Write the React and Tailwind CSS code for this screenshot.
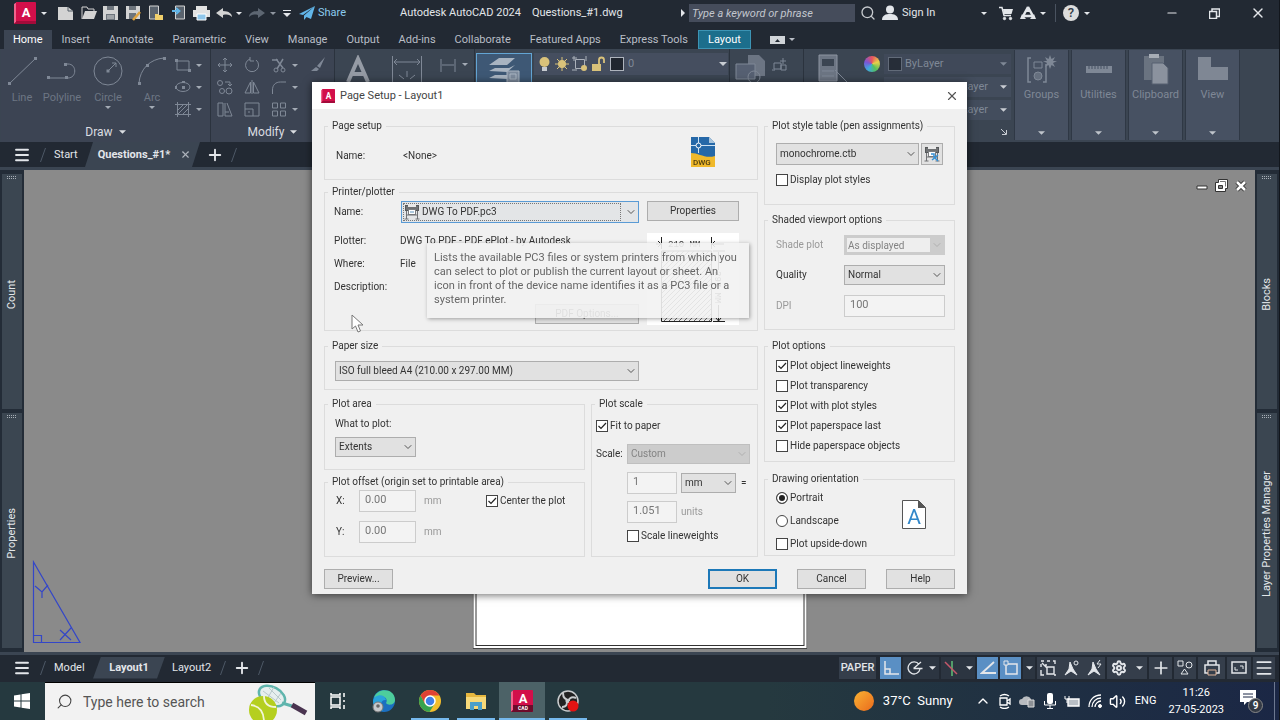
import { useState } from "react";
import clsx from "clsx";
import {
  ChevronDown,
  ChevronUp,
  Menu,
  Plus,
  Search,
  X,
  Settings,
  Volume2,
  Minus,
} from "lucide-react";

const ribbonTabs = [
  "Home",
  "Insert",
  "Annotate",
  "Parametric",
  "View",
  "Manage",
  "Output",
  "Add-ins",
  "Collaborate",
  "Featured Apps",
  "Express Tools",
  "Layout",
];

const plotOptions = [
  { label: "Plot object lineweights", checked: true },
  { label: "Plot transparency", checked: false },
  { label: "Plot with plot styles", checked: true },
  { label: "Plot paperspace last", checked: true },
  { label: "Hide paperspace objects", checked: false },
];

/* ---------- small shared pieces ---------- */

function Svg({ w = 16, h = 16, className, children, box }) {
  return (
    <svg
      width={w}
      height={h}
      viewBox={box || `0 0 ${w} ${h}`}
      fill="none"
      stroke="currentColor"
      className={clsx("shrink-0", className)}
      aria-hidden="true"
    >
      {children}
    </svg>
  );
}

function Caret({ className }) {
  return (
    <Svg w={8} h={4} className={className}>
      <path d="M0 0h8L4 4z" fill="currentColor" stroke="none" />
    </Svg>
  );
}

function SmallCaret({ className }) {
  return (
    <Svg w={6} h={3} className={className}>
      <path d="M0 0h6L3 3z" fill="currentColor" stroke="none" />
    </Svg>
  );
}

function Slash() {
  return (
    <Svg w={8} h={16} className="text-[#4d5866]">
      <path d="M1.500 15L6.500 1" />
    </Svg>
  );
}

function AcadLogo({ size = 22, cad }) {
  return (
    <Svg w={size} h={size} box="0 0 22 22">
      <path d="M0 2L3 0v20l-3 2z" fill="#f0648c" stroke="none" />
      <path d="M2 0h19a1 1 0 0 1 1 1v20a1 1 0 0 1-1 1H0l2-2z" fill="#d20f4a" stroke="none" />
      <path
        d={cad ? "M2 15h20v6a1 1 0 0 1-1 1H0l2-2z" : "M2 19h20v2a1 1 0 0 1-1 1H0l2-2z"}
        fill={cad ? "#6d0b2b" : "#a30b3a"}
        stroke="none"
      />
      <text
        x="12"
        y={cad ? 13 : 15}
        textAnchor="middle"
        fontSize="13"
        fontWeight="700"
        fill="#fff"
        stroke="none"
        className="font-['Roboto',sans-serif]"
      >
        A
      </text>
      {cad && (
        <text
          x="12"
          y="20"
          textAnchor="middle"
          fontSize="5"
          fontWeight="700"
          fill="#fff"
          stroke="none"
          className="font-['Roboto',sans-serif]"
        >
          CAD
        </text>
      )}
    </Svg>
  );
}

function PlotterIcon({ blue }) {
  return (
    <Svg w={16} h={16}>
      <rect x="1.500" y="1.500" width="13" height="5" fill="#6f7173" stroke="#55585a" />
      <rect x="4" y="0" width="8" height="3" fill="#e9e9e9" stroke="none" />
      <rect x="4.500" y="5.500" width="7" height="5" fill="#fff" stroke="#7b7d80" />
      <path d="M2.500 7v8M13.500 7v8M0.500 15h4M11.500 15h4M3 11h10" stroke="#707275" />
      {blue ? (
        <path d="M7 8h3v3l4 4M14 9l-6 5" stroke="#3490d6" strokeWidth="1.500" />
      ) : (
        <path d="M6 8h4" stroke="#5c93bd" />
      )}
    </Svg>
  );
}

/* ---------- form controls of the dialog ---------- */

function Group({ title, className, children }) {
  return (
    <fieldset className={clsx("min-w-0 border border-[#dcdcdc]", className)}>
      <legend className="ml-[3px] h-[14px] px-1 leading-[14px]">{title}</legend>
      {children}
    </fieldset>
  );
}

function Select({ id, label, value, disabled, className, icon, focused, framed }) {
  return (
    <div className={clsx("relative", className)}>
      {icon && (
        <div className="pointer-events-none absolute inset-y-0 left-[3px] flex items-center">
          {icon}
        </div>
      )}
      <select
        id={id}
        aria-label={label}
        disabled={disabled}
        defaultValue={value}
        className={clsx(
          "h-full w-full appearance-none outline-none",
          framed
            ? "border-3 border-r-[15px] border-[#cccccc] bg-[#eeeeee] pl-px text-[#838383] opacity-100"
            : "border pr-5",
          !framed && (icon ? "pl-5" : "pl-[3px]"),
          !framed &&
            (disabled
              ? "border-[#bfbfbf] bg-[#cccccc] text-[#838383] opacity-100"
              : focused
                ? "border-[#5a9bd5] bg-[#e3e5e7]"
                : "border-[#adadad] bg-[#e1e1e1]")
        )}
      >
        <option>{value}</option>
      </select>
      {focused && (
        <div className="pointer-events-none absolute inset-y-[2px] left-[2px] right-[18px] border border-dotted border-[#777]" />
      )}
      <ChevronDown
        size={12}
        strokeWidth={2}
        className={clsx(
          "pointer-events-none absolute inset-y-0 right-[2px] my-auto",
          disabled ? "text-[#b0b0b0]" : "text-[#555]"
        )}
      />
    </div>
  );
}

function Tick({ label, checked }) {
  const [on, setOn] = useState(Boolean(checked));
  return (
    <label className="flex items-center gap-[2px]">
      <span className="relative flex size-3">
        <input
          type="checkbox"
          checked={on}
          onChange={(e) => setOn(e.target.checked)}
          className="size-3 appearance-none border border-[#444] bg-white"
        />
        {on && (
          <Svg w={12} h={12} className="pointer-events-none absolute text-[#222]">
            <path d="M2.500 6l2.500 2.500L10 3" strokeWidth="1.200" />
          </Svg>
        )}
      </span>
      {label}
    </label>
  );
}

function Radio({ label, value, current, onPick }) {
  return (
    <label className="flex items-center gap-[2px]">
      <input
        type="radio"
        name="orientation"
        value={value}
        checked={current === value}
        onChange={() => onPick(value)}
        className="size-3 appearance-none rounded-full border border-[#444] bg-white checked:bg-[#222] checked:shadow-[inset_0_0_0_2px_#fff]"
      />
      {label}
    </label>
  );
}

function Button({ children, className, primary }) {
  return (
    <button
      type="button"
      className={clsx(
        "h-5 bg-[#e1e1e1]",
        primary ? "border-2 border-[#1c78b8]" : "border border-[#adadad]",
        className
      )}
    >
      {children}
    </button>
  );
}

function NumberBox({ id, label, value, className }) {
  return (
    <input
      id={id}
      aria-label={label}
      type="text"
      disabled
      defaultValue={value}
      className={clsx(
        "h-[22px] border border-[#cccccc] bg-[#f3f3f3] pb-1 pl-[5px] text-[11px] text-[#777]",
        className
      )}
    />
  );
}

/* ---------- title bar ---------- */

function TitleBar() {
  return (
    <header className="flex h-[26px] shrink-0 items-center bg-[#222933] text-[11px] text-[#e3e6ea]">
      <button type="button" aria-label="Application menu" className="ml-[14px] flex items-center gap-1">
        <AcadLogo />
        <SmallCaret className="ml-[1px]" />
      </button>
      <div className="ml-2 grid w-[180px] grid-cols-8 place-items-center text-[#d3d3d3]">
        <Svg>
          <path d="M0 2h10l5 4v9H0z" fill="currentColor" stroke="none" />
          <path d="M10 2v4h5" stroke="#555e69" />
        </Svg>
        <Svg>
          <path d="M1 14V2h5l1 2h6v2" />
          <path d="M1 14L4 6h12l-3 8z" fill="currentColor" stroke="none" />
        </Svg>
        <Svg>
          <path d="M0 1h15v14H0z" fill="currentColor" stroke="none" />
          <path d="M4 1h7v4H4zM3 9h9v6H3z" fill="#6d747c" stroke="none" />
          <path d="M4 11h7M4 13h7" stroke="#d3d3d3" />
        </Svg>
        <Svg>
          <path d="M0 1h14v13H0z" fill="currentColor" stroke="none" />
          <path d="M3 1h7v4H3zM3 8h7v6H3z" fill="#6d747c" stroke="none" />
          <path d="M7 15l7-8" stroke="#e0a33e" strokeWidth="2.500" />
        </Svg>
        <Svg>
          <path d="M1.500 1h9v13h-9z" fill="#59626d" />
          <path d="M7 9h3l1 1h4v5H7z" fill="#f0cf6b" stroke="none" />
        </Svg>
        <Svg>
          <path d="M4.500 1h9v13h-9z" fill="#59626d" />
          <path d="M1 6h6M5 3l3.500 3L5 9" stroke="#62b6e8" strokeWidth="1.800" />
        </Svg>
        <Svg w={17} h={16}>
          <path d="M3 1h11v4H3zM0 5h17v7H0z" fill="#e2e2e2" stroke="none" />
          <path d="M4 9h9v6H4z" fill="#8fc6ea" stroke="#fff" />
        </Svg>
        <Svg>
          <path d="M0 8l7-5v3c6 0 9 3 9 6-2-2-4-3-9-2v3z" fill="currentColor" stroke="none" />
        </Svg>
      </div>
      <SmallCaret className="ml-[1px]" />
      <Svg className="ml-[7px] text-[#5d6672]">
        <path d="M16 8L9 3v3c-6 0-9 3-9 6 2-2 4-3 9-2v3z" fill="currentColor" stroke="none" />
      </Svg>
      <SmallCaret className="ml-[5px] text-[#8f96a0]" />
      <Svg w={8} h={7} className="ml-[7px]">
        <path d="M0 .5h8" />
        <path d="M0 3h8L4 7z" fill="currentColor" stroke="none" />
      </Svg>
      <button type="button" className="ml-2 flex items-center gap-[3px] text-[#8ccbee]">
        <Svg w={16} h={14}>
          <path d="M16 0L0 8l4 1zM16 0L5 9.500V14l2.500-3L12 13z" fill="#62b6ea" stroke="none" />
        </Svg>
        Share
      </button>
      <h1 className="ml-[54px] whitespace-pre">
        Autodesk AutoCAD 2024{"    "}Questions_#1.dwg
      </h1>
      <div className="ml-auto flex items-center">
        <Svg w={4} h={8}>
          <path d="M0 0v8l4-4z" fill="currentColor" stroke="none" />
        </Svg>
        <input
          type="text"
          aria-label="Search help"
          placeholder="Type a keyword or phrase"
          className="ml-1 h-[18px] w-[166px] bg-[#454c5b] px-[3px] italic placeholder:text-[#c3c7ce]"
        />
        <Search size={16} className="ml-[5px] text-[#c6cace]" />
        <Svg className="ml-[6px]">
          <circle cx="8" cy="4.500" r="4" fill="currentColor" stroke="none" />
          <path d="M0 15c0-5 4-6 8-6s8 1 8 6z" fill="currentColor" stroke="none" />
        </Svg>
        <a href="#signin" className="ml-1 w-[79px]">Sign In</a>
        <SmallCaret />
        <Svg w={15} h={15} className="ml-3">
          <path d="M0 1.500h3l2 8h7" strokeWidth="1.500" />
          <path d="M4 3h10l-1.500 5h-8z" fill="currentColor" stroke="none" />
          <circle cx="5.500" cy="12.500" r="1.200" fill="currentColor" />
          <circle cx="11.500" cy="12.500" r="1.200" fill="currentColor" />
        </Svg>
        <Svg className="ml-[6px]">
          <path d="M8 2L2 13M8 2l6 11M4 11h8" strokeWidth="2.500" />
          <path d="M8 1l3 6H5zM0 14l2-5 4 5zM16 14l-2-5-4 5z" fill="currentColor" stroke="none" />
        </Svg>
        <SmallCaret className="ml-1" />
        <div className="ml-[9px] h-[18px] w-px bg-[#4a5360]" />
        <span className="ml-[7px] flex size-4 items-center justify-center rounded-full bg-[#dcdcdc] text-[13px] font-medium text-[#333b46]">
          ?
        </span>
        <SmallCaret className="ml-[5px]" />
        <button type="button" aria-label="Minimize" className="ml-[75px]">
          <Minus size={14} strokeWidth={2} />
        </button>
        <button type="button" aria-label="Restore" className="ml-[30px]">
          <Svg w={11} h={11}>
            <path d="M.5 3.500h7v7h-7zM3 3V1h7.500v7.500H8" strokeWidth="1.500" />
          </Svg>
        </button>
        <button type="button" aria-label="Close" className="mr-[13px] ml-[30px]">
          <X size={16} />
        </button>
      </div>
    </header>
  );
}

function RibbonTabs() {
  return (
    <nav className="flex h-[23px] shrink-0 items-end gap-px bg-[#222933] pl-1 text-[11px] text-[#b9bec6]">
      {ribbonTabs.map((tab) => (
        <a
          key={tab}
          href={`#${tab}`}
          className={clsx(
            "flex h-[19px] items-center px-[9px]",
            tab === "Home" && "bg-[#3c4553] text-white",
            tab === "Layout" && "border border-[#3c94b4] bg-[#1c6e8c] text-white"
          )}
        >
          {tab}
        </a>
      ))}
      <div className="flex h-[19px] items-center gap-1 pl-[18px]">
        <Svg w={15} h={8}>
          <path d="M0 0h15v8H0z" fill="#d0d4d8" stroke="none" />
          <path d="M5 6h5L7.500 3z" fill="#222933" stroke="none" />
        </Svg>
        <SmallCaret />
      </div>
    </nav>
  );
}

/* ---------- ribbon ---------- */

function BigTool({ label, className, caret, children }) {
  return (
    <button type="button" className={clsx("flex flex-col items-center", className)}>
      <Svg w={32} h={32}>{children}</Svg>
      <span className="mt-[3px] leading-[16px] text-[#6d7684]">{label}</span>
      {caret && <SmallCaret className="text-[#a4abb5]" />}
    </button>
  );
}

function PanelTitle({ children }) {
  return (
    <div className="flex h-5 items-center justify-center gap-[6px] text-[12px] text-[#dadde1]">
      {children} <Caret className="w-[7px]" />
    </div>
  );
}

function Ribbon() {
  return (
    <section className="flex h-[93px] shrink-0 overflow-hidden bg-[#3b4552] pl-px text-[11px] text-[#7f8896]">
      {/* Draw */}
      <div className="flex w-[210px] shrink-0 flex-col border-r border-[#2b333e] bg-[#3c4453]">
        <div className="flex flex-1 pt-[6px] pl-[2px]">
          <BigTool label="Line" className="w-[38px]">
            <path d="M3 29L30 3" />
            <path d="M2 27h3v3H2zM28 2h3v3h-3z" fill="currentColor" stroke="none" />
          </BigTool>
          <BigTool label="Polyline" className="w-[42px]">
            <path d="M2 23h20c9 0 9-14 0-14h-3" />
            <path d="M1 21h3v3H1zM19 21h3v3h-3zM18 8h3v3h-3z" fill="currentColor" stroke="none" />
          </BigTool>
          <BigTool label="Circle" className="w-[50px]" caret>
            <circle cx="16" cy="16" r="14" />
            <path d="M16 16l8-8M20 8h4v4" />
            <path d="M14.500 14.500h3v3h-3z" fill="currentColor" stroke="none" />
          </BigTool>
          <BigTool label="Arc" className="w-[38px]" caret>
            <path d="M3 28C4 14 14 4 28 3" />
            <path d="M2 27h3v3H2zM10 9h3v3h-3zM27 2h3v3h-3z" fill="currentColor" stroke="none" />
          </BigTool>
          <div className="ml-1 flex flex-col gap-[6px] pt-[2px]">
            <div className="flex items-center gap-[5px]">
              <Svg>
                <path d="M2 4h12v9H2z" />
                <path d="M0 2h3v3H0zM13 12h3v3h-3z" fill="currentColor" stroke="none" />
              </Svg>
              <SmallCaret className="text-[#a4abb5]" />
            </div>
            <div className="flex items-center gap-[5px]">
              <Svg>
                <ellipse cx="8" cy="8" rx="7" ry="4.500" />
                <path d="M7 7h3v3H7zM0 7h2v3H0zM7 2h3v2H7z" fill="currentColor" stroke="none" />
              </Svg>
              <SmallCaret className="text-[#a4abb5]" />
            </div>
            <div className="flex items-center gap-[5px]">
              <Svg>
                <path d="M0 3.500h16M0 13.500h16M2.500 1v15M13.500 1v15M3 9l6-6M3 13L13 3M8 13l5-5" />
              </Svg>
              <SmallCaret className="text-[#a4abb5]" />
            </div>
          </div>
        </div>
        <PanelTitle>Draw</PanelTitle>
      </div>

      {/* Modify */}
      <div className="flex w-[124px] shrink-0 flex-col border-r border-[#2b333e] bg-[#3c4453]">
        <div className="grid flex-1 auto-rows-[22px] grid-cols-[27px_27px_39px_27px] content-start items-center pt-[5px] pl-[6px]">
          <Svg>
            <path d="M8 1v14M1 8h14M6 3l2-2 2 2M6 13l2 2 2-2M3 6L1 8l2 2M13 6l2 2-2 2" />
          </Svg>
          <Svg>
            <path d="M12 3a6.500 6.500 0 1 1-6-1M6 0v4h4" />
          </Svg>
          <div className="flex items-center gap-[5px]">
            <Svg>
              <path d="M1 3h6M5 2l7 9M12 2L6 12" strokeWidth="1.500" />
              <circle cx="5" cy="13" r="2" />
              <circle cx="12" cy="13" r="2" />
            </Svg>
            <SmallCaret className="text-[#a4abb5]" />
          </div>
          <Svg>
            <path d="M15 0L7 9l3 2zM6 10l3 2-2 2H1z" fill="currentColor" stroke="none" />
          </Svg>
          <Svg>
            <circle cx="3" cy="4" r="2.500" />
            <circle cx="5" cy="12" r="2.500" />
            <circle cx="12" cy="12" r="3" />
            <path d="M8 3h5v4M11 5l2 2 2-2" />
          </Svg>
          <Svg>
            <path d="M6.500 3v11H1zM9.500 3v11H15zM8 1v14" />
          </Svg>
          <div className="flex items-center gap-[5px]">
            <Svg>
              <path d="M1.500 15v-4c0-5 3-8 8-8H15" />
            </Svg>
            <SmallCaret className="text-[#a4abb5]" />
          </div>
          <Svg>
            <path d="M2 13h12M4 10h8V5H4z" />
          </Svg>
          <Svg>
            <path d="M1 2h5v13H1zM8 2v13h7L10 2M8 11h4" />
          </Svg>
          <Svg>
            <path d="M1 2h14v13H1zM1 8h8v7M4 11h2" />
          </Svg>
          <div className="flex items-center gap-[5px]">
            <Svg>
              <path d="M1.500 2h5v5h-5zM9.500 2h5v5h-5zM1.500 10h5v5h-5zM9.500 10h5v5h-5z" />
            </Svg>
            <SmallCaret className="text-[#a4abb5]" />
          </div>
          <Svg>
            <path d="M2 4h12M2 9h12" />
          </Svg>
        </div>
        <PanelTitle>Modify</PanelTitle>
      </div>

      {/* Annotation */}
      <div className="flex w-[140px] shrink-0 items-start border-r border-[#2b333e] pt-[6px] pl-[10px]">
        <Svg w={26} h={28} className="text-[#959ba5]">
          <path d="M3 27L13 4l10 23M7 19h12" strokeWidth="4" />
        </Svg>
        <Svg w={32} h={32} className="ml-5">
          <path d="M1.500 1v30M30.500 1v30M3 7h26M6 4L3 7l3 3M26 4l3 3-3 3M16 16v6M8 20l5 4M24 20l-5 4" />
        </Svg>
        <Svg className="mt-[2px] ml-[17px]">
          <path d="M1 2v13M15 2v13M2 8h12" />
        </Svg>
        <SmallCaret className="mt-2 ml-[6px] text-[#a4abb5]" />
      </div>

      {/* Layers */}
      <div className="flex w-[255px] shrink-0 items-start gap-[2px] border-r border-[#2b333e] pt-1 pl-px">
        <button
          type="button"
          aria-label="Layer Properties"
          className="flex h-16 w-14 justify-center border border-[#63a5d4] bg-[#3e5875] pt-[2px]"
        >
          <Svg w={34} h={30} className="text-[#a9b4c1]">
            <path
              d="M2 9l10-7h16l-8 7zM2 15l6-3h14l6-3-8 7zM2 22l6-3h14l6-3-8 7z"
              fill="currentColor"
              stroke="none"
            />
            <path d="M20 15h12v14H20z" fill="#7d8b9d" />
            <path d="M23 18h6v5h-6z" />
          </Svg>
        </button>
        <div className="flex h-[22px] w-[194px] items-center gap-[2px] bg-[#454e5f] pr-[1px] pl-[3px]">
          <Svg w={15} h={16}>
            <circle cx="7.500" cy="6" r="5" fill="#d9c27a" stroke="none" />
            <path d="M5 11h5v4H5z" fill="#c7cbd0" stroke="none" />
          </Svg>
          <Svg>
            <circle cx="8" cy="8" r="4" fill="#d9c27a" stroke="none" />
            <path
              d="M8 1v14M1 8h14M3 3l10 10M13 3L3 13"
              stroke="#d9c27a"
              strokeWidth="1"
            />
          </Svg>
          <Svg>
            <path d="M3.500 3.500h9v9h-9z" stroke="#aab0b9" />
            <path d="M0 2h5M2 0v5M14 0v5M0 14h5" stroke="#aab0b9" />
            <circle cx="12" cy="12" r="3" fill="#d9c27a" stroke="none" />
          </Svg>
          <Svg>
            <path d="M2 8h9v7H2z" fill="#d9c27a" stroke="none" />
            <path d="M9 8V4a2.500 2.500 0 0 1 5 0v3" stroke="#d9c27a" strokeWidth="1.800" />
          </Svg>
          <div className="ml-[2px] size-[14px] border border-[#aeb4bd] bg-[#20262f]" />
          <span className="ml-[2px] text-[11px]">0</span>
          <Caret className="ml-auto text-[#c9cdd3]" />
        </div>
      </div>

      {/* Block */}
      <div className="flex w-[74px] shrink-0 items-start border-r border-[#2b333e] pt-[6px] pl-[5px]">
        <Svg w={32} h={28}>
          <path d="M13 0h11l6 6v15H13z" fill="#6c7583" stroke="none" />
          <path d="M1 9h19v15H1z" fill="#566072" />
          <circle cx="19" cy="22" r="6" />
        </Svg>
        <Svg className="mt-[2px] ml-[5px]">
          <path d="M2 6h7v6H2zM0 13h3M9 8h5v5H9zM11 1v6M8 4h6" />
        </Svg>
      </div>

      {/* Properties */}
      <div className="flex w-[208px] shrink-0 items-start pt-[5px] pl-[14px]">
        <Svg w={32} h={30}>
          <path d="M1 1h18v26H1z" fill="#6c7583" stroke="#8d95a1" />
          <path d="M4 5h12v7H4z" fill="#3b4552" stroke="none" />
          <path d="M4 17h12M4 22h12M17 16l12 12" />
        </Svg>
        <div className="mr-[1px] ml-[14px] flex flex-1 flex-col gap-[3px]">
          <div className="flex h-5 items-center gap-1">
            <span className="size-4 rounded-full bg-[conic-gradient(#e8525f,#e8d04a,#57c05a,#3fa9e0,#7a56d8,#e8525f)]" />
            <div className="flex h-5 flex-1 items-center gap-[3px] bg-[#404959] px-1">
              <div className="size-[14px] border border-[#626b79] bg-[#262d38]" />
              ByLayer
              <Caret className="ml-auto w-[7px]" />
            </div>
          </div>
          {["Lineweight", "Linetype"].map((row) => (
            <div key={row} aria-label={row} className="ml-5 flex h-5 items-center justify-end gap-3 bg-[#434d5d] pr-1">
              ByLayer
              <Caret className="w-[7px] text-[#c9cdd3]" />
            </div>
          ))}
          <Svg w={6} h={6} className="mt-[6px] mr-1 ml-auto text-[#c9cdd3]">
            <path d="M0 0l5 5M5.500 1v4.500H1" />
          </Svg>
        </div>
      </div>

      {/* Collapsed panels */}
      <div className="flex shrink-0 gap-[2px] pt-px pb-[2px] pl-[2px]">
        {["Groups", "Utilities", "Clipboard", "View"].map((name) => (
          <button
            key={name}
            type="button"
            className="flex w-[55px] flex-col items-center border-x border-[#2f3845] bg-[#475162] pt-1"
          >
            <Svg w={32} h={32}>
              {name === "Groups" && (
                <>
                  <path d="M5 4H2v24h3M20 10v18h-3" strokeWidth="1.500" />
                  <path d="M8 8h8v6H8z" />
                  <circle cx="12" cy="22" r="4" fill="#656f7e" />
                  <path d="M24 1l1.500 4L29 3l-2 4h4l-4 2 2 4-3.500-2L24 15l-1.500-4L19 13l2-4-4-2h4l-2-4 3.500 2z" fill="currentColor" stroke="none" />
                </>
              )}
              {name === "Utilities" && (
                <>
                  <path d="M3 12h26v7H3z" fill="currentColor" stroke="none" />
                  <path d="M6 12v3M9 12v3M12 12v3M15 12v3M18 12v3M21 12v3M24 12v3" stroke="#475162" />
                </>
              )}
              {name === "Clipboard" && (
                <>
                  <path d="M4 2h20v24H4z" fill="#6a7380" stroke="none" />
                  <path d="M9 0h10v4H9z" fill="#a7adb6" stroke="none" />
                  <path d="M12 9h11l5 5v16H12z" fill="#8b929e" stroke="#566071" />
                </>
              )}
              {name === "View" && (
                <path d="M1 3h13v10h17v13H1z" fill="#7f8794" stroke="none" />
              )}
            </Svg>
            <span className="mt-px leading-[16px]">{name}</span>
            <Caret className="mt-auto mb-[5px] w-[7px] text-[#bfc4cb]" />
          </button>
        ))}
      </div>
    </section>
  );
}

function FileTabs() {
  return (
    <nav className="flex h-[25px] shrink-0 items-center bg-[#222933] pl-[13px] text-[11px] text-[#e3e6ea]">
      <Menu size={18} strokeWidth={2.500} />
      <span className="ml-2"><Slash /></span>
      <a href="#start" className="ml-[7px] w-[31px]">Start</a>
      <div className="flex h-full w-[115px] items-center justify-center gap-[10px] bg-[#3b4552] pl-1 font-bold [clip-path:polygon(8px_0,100%_0,107px_100%,0_100%)]">
        Questions_#1*
        <button type="button" aria-label="Close tab">
          <X size={11} strokeWidth={2.500} className="text-[#aeb4bc]" />
        </button>
      </div>
      <button type="button" aria-label="New tab" className="ml-[6px]">
        <Plus size={18} strokeWidth={2.500} />
      </button>
      <span className="ml-[6px]"><Slash /></span>
    </nav>
  );
}

/* ---------- drawing area ---------- */

function Palettes({ names }) {
  return (
    <aside className="flex w-6 shrink-0 flex-col gap-1 bg-[#232c37] px-[2px] pt-1 pb-1">
      {names.map((name) => (
        <div key={name} className="flex flex-1 flex-col items-center bg-[#3b4651]">
          <Svg w={10} h={4} className="mt-[2px] text-[#a9b0b8]">
            <path d="M0 .5h10M0 2.500h10" strokeDasharray="1 1" />
          </Svg>
          <div className="flex flex-1 items-center">
            <span className="rotate-180 text-[11px] leading-5 text-[#e3e6ea] [writing-mode:vertical-rl]">
              {name}
            </span>
          </div>
        </div>
      ))}
    </aside>
  );
}

function Workspace() {
  return (
    <main className="flex min-h-0 flex-1 border-y-[3px] border-[#3b4552]">
      <Palettes names={["Count", "Properties"]} />
      <div className="relative flex-1 overflow-hidden bg-[#8a8a8a]">
        {/* paper sheet */}
        <div className="absolute bottom-[3px] left-1/2 h-[460px] w-[335px] -translate-x-1/2 border border-[#444] bg-white p-[2px]">
          <div className="h-full border border-[#333]" />
        </div>
        {/* UCS icon */}
        <Svg w={50} h={84} className="absolute bottom-[8px] left-[8px] text-[#3346c8]">
          <path d="M1.500 2v80.500H48zM1.500 75.500h8v7M3 26l7 6 6-7M10 32v6M28 70l11 10M28 80l11-12" strokeWidth="1.200" />
        </Svg>
        <div className="absolute top-[9px] right-2 flex items-center gap-[7px] text-white">
          <Svg w={12} h={11}>
            <path d="M1 6h10v3H1z" fill="#fff" stroke="#333" />
          </Svg>
          <Svg w={13} h={13}>
            <path d="M3.500 .5h9v9h-2v3h-10v-9h3z" fill="#fff" stroke="#333" />
            <path d="M3.500 6.500h4v3h-4z" fill="#8a8a8a" stroke="#333" />
            <path d="M5 2.500h5.500v5" stroke="#777" />
          </Svg>
          <Svg w={12} h={12}>
            <path d="M2 2l8 8M10 2l-8 8" stroke="#333" strokeWidth="4.500" />
            <path d="M2 2l8 8M10 2l-8 8" strokeWidth="2.500" />
          </Svg>
        </div>
      </div>
      <Palettes names={["Blocks", "Layer Properties Manager"]} />
    </main>
  );
}

function StatusBar() {
  return (
    <footer className="flex h-[27px] shrink-0 items-center bg-[#222933] pb-[2px] pl-[13px] text-[11px] text-[#e3e6ea]">
      <Menu size={18} strokeWidth={2.500} />
      <span className="ml-2"><Slash /></span>
      <a href="#model" className="ml-[7px] w-[39px]">Model</a>
      <a
        href="#layout1"
        className="flex h-[22px] w-[72px] items-center justify-center bg-[#3b4552] font-bold [clip-path:polygon(8px_0,100%_0,64px_100%,0_100%)]"
      >
        Layout1
      </a>
      <a href="#layout2" className="ml-[7px]">Layout2</a>
      <span className="ml-2"><Slash /></span>
      <button type="button" aria-label="New layout" className="ml-[6px]">
        <Plus size={18} strokeWidth={2.500} />
      </button>
      <span className="ml-[6px]"><Slash /></span>

      <div className="mr-1 ml-auto flex h-[22px] items-stretch gap-[2px]">
        <button type="button" className="w-[37px] bg-[#353e4b] font-medium">PAPER</button>
        <div className="ml-[2px] flex w-[21px] items-center justify-center bg-[#5a8fc4]">
          <Svg><path d="M2 1v13h14M2 9h5v5" strokeWidth="1.500" /></Svg>
        </div>
        <div className="flex w-[36px] items-center justify-center gap-[6px] bg-[#2c3541]">
          <Svg>
            <path d="M12 4.500A6 6 0 1 0 13 9M6.500 8.500h9M6.500 8.500L14 2" strokeWidth="1.300" />
          </Svg>
          <Caret className="w-[7px]" />
        </div>
        <div className="flex w-[34px] items-center justify-center gap-2 bg-[#2c3541]">
          <Svg w={14} h={16}>
            <path d="M8 1v15" stroke="#5fbf77" strokeWidth="1.500" />
            <path d="M1 2l12 12" stroke="#c4586b" strokeWidth="1.500" />
          </Svg>
          <Caret className="w-[7px]" />
        </div>
        <div className="flex w-[21px] items-center justify-center bg-[#5a8fc4]">
          <Svg><path d="M14 2L2 13h14" strokeWidth="1.800" /></Svg>
        </div>
        <div className="flex w-[21px] items-center justify-center bg-[#5a8fc4]">
          <Svg>
            <path d="M3 4h11v10H3z" strokeWidth="1.500" />
            <path d="M1 1h4v4H1z" fill="#5a8fc4" />
          </Svg>
        </div>
        <div className="flex w-[12px] items-center justify-center bg-[#2c3541]">
          <Caret className="w-[7px]" />
        </div>
        <div className="flex w-[68px] items-center justify-around bg-[#353e4b]">
          <Svg>
            <path d="M1 1h3M7 1h3M13 1h2v3M1 4v3M1 10v5h3M2 3l5 5M7 7h7v7H7zM5 5h2M14 15h2" strokeWidth="1.400" />
          </Svg>
          <Svg>
            <path d="M7 2l3 7 4 6-6-4-6 4 4-6z" fill="currentColor" />
            <circle cx="13" cy="3" r="2" />
          </Svg>
          <Svg>
            <path d="M7 2l3 7 4 6-6-4-6 4 4-6z" fill="currentColor" />
            <path d="M14 0l-3 4h4l-3 4" />
          </Svg>
        </div>
        <div className="flex w-[40px] items-center justify-center gap-[9px] bg-[#353e4b]">
          <Settings size={16} strokeWidth={3} />
          <Caret className="w-[7px]" />
        </div>
        <div className="flex w-[23px] items-center justify-center bg-[#353e4b]">
          <Plus size={20} />
        </div>
        <div className="flex w-[22px] items-center justify-center bg-[#353e4b]">
          <Svg>
            <path d="M1 1h5v5H1z" />
            <circle cx="12" cy="5" r="3" />
            <path d="M4 14h7L7.500 9z" />
          </Svg>
        </div>
        <div className="flex w-[27px] items-center justify-center bg-[#353e4b]">
          <Svg>
            <path d="M4 5V1h8v4M1 5h14v8H1z" strokeWidth="1.500" />
            <path d="M4 10h8v5H4z" fill="#353e4b" stroke="#e0b49a" />
          </Svg>
        </div>
        <div className="flex w-[24px] items-center justify-center bg-[#353e4b]">
          <Svg>
            <path d="M1 2h14v11H1z" strokeWidth="1.500" />
            <path d="M9 6h3v3M7 10H4V7" />
          </Svg>
        </div>
        <div className="flex w-[22px] items-center justify-center bg-[#353e4b]">
          <Menu size={20} strokeWidth={2} />
        </div>
      </div>
    </footer>
  );
}

/* ---------- Windows taskbar ---------- */

function TaskApp({ label, active, running, children }) {
  return (
    <button
      type="button"
      aria-label={label}
      className={clsx(
        "relative flex h-full w-[46px] items-center justify-center",
        active && "bg-[#4c6267]"
      )}
    >
      {children}
      {running && (
        <span
          className={clsx(
            "absolute bottom-0 h-[2px] bg-[#76b9ed]",
            active ? "inset-x-0" : "inset-x-1"
          )}
        />
      )}
    </button>
  );
}

function Taskbar() {
  return (
    <footer className="flex h-[38px] shrink-0 items-center bg-linear-to-r from-[#25393f] from-60% to-[#1b2745] text-white">
      <button type="button" aria-label="Start" className="ml-[14px]">
        <Svg>
          <path d="M0 2.500L6.500 1.500V7.500H0zM7.500 1.300L16 0v7.500H7.500zM0 8.500h6.500v6L0 13.600zM7.500 8.500H16V16L7.500 14.700z" fill="#fff" stroke="none" />
        </Svg>
      </button>
      <div className="ml-[15px] flex h-full w-[270px] items-center overflow-hidden border-t border-black bg-[#f2f2f2] pl-[11px] text-[#444]">
        <Search size={17} strokeWidth={1.500} className="-scale-x-100" />
        <input
          type="text"
          aria-label="Type here to search"
          placeholder="Type here to search"
          className="ml-[10px] w-[165px] text-[14px] placeholder:text-[#555]"
        />
        <Svg w={62} h={38}>
          <ellipse cx="24" cy="13" rx="14" ry="9" transform="rotate(28 24 13)" fill="#e6eeee" stroke="#5fb5ad" strokeWidth="2.500" />
          <path d="M15 8l16 12M21 5l12 12M13 14l10 7M18 18l8-14M26 20l7-10" stroke="#b8c8ca" />
          <path d="M34 20l10 3" stroke="#5fb5ad" strokeWidth="3" />
          <path d="M44 22l14 8" stroke="#4a3450" strokeWidth="5" />
          <circle cx="15" cy="27" r="14" fill="#b5cf1f" stroke="none" />
          <path d="M3 22c8 1 13 6 13 17M16 13c0 8 4 11 12 11" stroke="#f2f5da" strokeWidth="1.800" />
        </Svg>
      </div>
      <div className="flex h-full flex-1 items-center">
        <TaskApp label="Task View">
          <Svg>
            <path d="M1 4h9v8H1zM1 0v2h9V0M1 16v-2h9v2M14 0v4M14 12v4M14 7v2" strokeWidth="1.500" />
          </Svg>
        </TaskApp>
        <TaskApp label="Edge">
          <Svg w={24} h={24}>
            <circle cx="12" cy="12" r="11" fill="#1b6fc0" stroke="none" />
            <path d="M2 9C5-2 23-1 23 11c0 5-7 6-9 3 3-5-4-9-12-5z" fill="#4dcd9c" stroke="none" />
            <path d="M1 12c1-7 12-8 13-1-5-1-7 6-3 11C5 22 1 18 1 12z" fill="#2aa3dc" stroke="none" />
            <circle cx="6" cy="18" r="5" fill="#c6c9cc" stroke="#777" />
            <circle cx="6" cy="17" r="1.800" fill="#666" stroke="none" />
          </Svg>
        </TaskApp>
        <TaskApp label="Chrome" running>
          <Svg w={24} h={24}>
            <circle cx="12" cy="12" r="11" fill="#f2bd2c" stroke="none" />
            <path d="M2.500 6.500a11 11 0 0 1 19 0H12L7 15z" fill="#df4234" stroke="none" />
            <path d="M2.500 6.500a11 11 0 0 0 9 16.500l5-8-9.500 0z" fill="#37a350" stroke="none" />
            <circle cx="12" cy="12" r="5" fill="#3f7fe8" stroke="#fff" strokeWidth="1.500" />
          </Svg>
        </TaskApp>
        <TaskApp label="File Explorer" running>
          <Svg w={22} h={20}>
            <path d="M1 2h8l2 2h10v14H1z" fill="#e6b73f" stroke="none" />
            <path d="M1 6h20v12H1z" fill="#f7d979" stroke="none" />
            <path d="M5 19v-8h12v8h-4v-4H9v4z" fill="#4b9fc9" stroke="none" />
          </Svg>
        </TaskApp>
        <TaskApp label="AutoCAD" active running>
          <AcadLogo size={22} cad />
        </TaskApp>
        <TaskApp label="OBS" running>
          <Svg w={24} h={24}>
            <circle cx="12" cy="12" r="10" fill="#222" stroke="#c9ccce" strokeWidth="1.500" />
            <path d="M7 4c0 5 3 7 7 7M20 9c-5-2-8 1-8 5M6 18c5 0 6-4 4-7" stroke="#c9ccce" strokeWidth="2" />
            <circle cx="17" cy="17" r="5.500" fill="#e31313" stroke="none" />
          </Svg>
        </TaskApp>
      </div>
      <div className="flex h-full items-center text-[11px]">
        <span className="size-5 rounded-full bg-linear-to-br from-[#f9b233] to-[#e9691c]" />
        <span className="ml-[9px] w-[98px] text-[13px] whitespace-pre">37°C{"  "}Sunny</span>
        <div className="ml-[2px] flex items-center gap-[7px]">
          <ChevronUp size={16} className="-ml-[8px]" />
          <Svg w={14} h={16}>
            <path d="M2 5h7v7H2zM9 8l3-2v5l-3-2M2 3c3-2 6-2 9 0M2 14c3 2 6 2 9 0" strokeWidth="1.300" />
          </Svg>
          <Svg w={17} h={14}>
            <path d="M3 11a3 3 0 0 1 0-6 5 5 0 0 1 9 0v6z" fill="#b9bcc0" stroke="none" />
            <path d="M9 6h6v7H9z" fill="#8d9196" stroke="#ddd" />
          </Svg>
          <Svg w={14} h={16}>
            <rect x="4" y="0" width="6" height="11" rx="2" fill="#fff" stroke="none" />
            <path d="M1.500 8v4h11V8M7 12v4M4 15.500h6" />
          </Svg>
          <Svg w={17} h={14}>
            <path d="M4 5h11v7H4z" fill="#b9bfc6" strokeWidth="1.400" />
            <path d="M1 2v3h4V2M3 5v4" />
          </Svg>
          <Svg w={14} h={14}>
            <path d="M1 13C1 6 6 1 13 1M4 13c0-5 4-9 9-9M7 13c0-3 3-6 6-6" strokeWidth="1.300" />
            <circle cx="12" cy="12" r="1.500" fill="#fff" />
          </Svg>
          <Volume2 size={17} />
          <span className="ml-[2px]">ENG</span>
        </div>
        <div className="ml-3 flex flex-col items-center leading-[17px]">
          <span>11:26</span>
          <span>27-05-2023</span>
        </div>
        <div className="relative ml-4 size-[22px]">
          <Svg w={16} h={16}>
            <path d="M0 0h16v12H7l-3 3v-3H0z" fill="#fff" stroke="none" />
            <path d="M3 4h10M3 7h10" stroke="#1b2745" />
          </Svg>
          <span className="absolute right-[-1px] bottom-[-1px] flex size-[15px] items-center justify-center rounded-full border border-[#888] bg-[#333a45] text-[10px] font-semibold">
            9
          </span>
        </div>
        <div className="mr-[4px] ml-[12px] h-full w-px bg-[#6d7890]" />
      </div>
    </footer>
  );
}

/* ---------- Page Setup dialog ---------- */

function PaperPreview() {
  return (
    <Svg w={92} h={92} className="mt-3 self-end text-[#222]">
      <defs>
        <pattern id="hatch" width="5" height="5" patternUnits="userSpaceOnUse">
          <path d="M-1 6L6-1M-1 1L1-1M4 6L6 4" stroke="#444" strokeWidth="0.800" />
        </pattern>
      </defs>
      <path d="M0 0h92v92H0z" fill="#fff" stroke="none" />
      <path d="M14.500 18h50v70.500h-50z" fill="url(#hatch)" />
      <path d="M14.500 4v12M64.500 4v12M9 11h5M65 11h12M11 8l3 3-3 3M68 8l-3 3 3 3M66 18h12M66 88.500h12M71.500 19v18M71.500 72v16M69 85l2.500 3 2.500-3" />
      <text x="21" y="14" fontSize="9" fill="#333" stroke="none" className="font-['Liberation_Mono',monospace]">
        210 MM
      </text>
      <text
        x="0"
        y="0"
        fontSize="9"
        fill="#333"
        stroke="none"
        transform="translate(68 38) rotate(90)"
        className="font-['Liberation_Mono',monospace]"
      >
        297 MM
      </text>
    </Svg>
  );
}

function PageSetupDialog() {
  const [orientation, setOrientation] = useState("portrait");

  return (
    <div className="fixed inset-0 flex items-start justify-center pt-[82px] pr-px">
      <div
        role="dialog"
        aria-labelledby="dialog-title"
        className="relative w-[655px] bg-[#f0f0f0] text-[10px] text-[#333] shadow-[0_1px_8px_rgba(0,0,0,0.6)]"
      >
        <div className="flex h-[27px] items-center gap-[5px] bg-white pr-2 pl-[9px]">
          <AcadLogo size={14} />
          <h2 id="dialog-title" className="text-[11px] text-[#444]">Page Setup - Layout1</h2>
          <button type="button" aria-label="Close" className="ml-auto">
            <X size={14} strokeWidth={2} className="text-[#555]" />
          </button>
        </div>

        <form className="px-3 pt-[10px] pb-[5px]" onSubmit={(e) => e.preventDefault()}>
          <div className="flex gap-[6px]">
            {/* left side */}
            <div className="flex flex-1 flex-col">
              <Group title="Page setup">
                <div className="flex h-[46px] items-center pr-[42px] pl-[11px]">
                  <span className="w-[67px]">Name:</span>
                  <span>&lt;None&gt;</span>
                  <Svg w={24} h={30} className="mb-2 ml-auto">
                    <path d="M0 0h18l6 6v16H0z" fill="#2568a8" stroke="none" />
                    <path d="M18 0v6h6z" fill="#a8c4dc" stroke="none" />
                    <path d="M0 16c8 0 14 6 24 3v11H0z" fill="#f0b92b" stroke="none" />
                    <path d="M0 8.500h24M7.500 0v16" stroke="#cfe2f2" />
                    <circle cx="7.500" cy="8.500" r="2.500" fill="#2568a8" stroke="#fff" />
                    <text x="2" y="28" fontSize="8" fontWeight="500" fill="#4c3c10" stroke="none" className="font-['Roboto',sans-serif]">
                      DWG
                    </text>
                  </Svg>
                </div>
              </Group>

              <Group title="Printer/plotter" className="mt-[5px]">
                <div className="flex gap-2 pt-[2px] pb-[5px] pl-[9px]">
                  <div className="w-[305px]">
                    <div className="flex h-[22px] items-center">
                      <label htmlFor="printer" className="w-[67px]">Name:</label>
                      <Select
                        id="printer"
                        value="DWG To PDF.pc3"
                        className="h-[22px] flex-1"
                        icon={<PlotterIcon />}
                        focused
                      />
                    </div>
                    <dl className="mt-[6px] grid auto-rows-[23px] grid-cols-[66px_1fr] items-center">
                      <dt>Plotter:</dt>
                      <dd>DWG To PDF - PDF ePlot - by Autodesk</dd>
                      <dt>Where:</dt>
                      <dd>File</dd>
                      <dt>Description:</dt>
                      <dd></dd>
                    </dl>
                    <div className="mt-[6px] flex justify-end">
                      <Button className="w-[104px]">PDF Options...</Button>
                    </div>
                  </div>
                  <div className="flex flex-col">
                    <Button className="w-[92px]">Properties</Button>
                    <PaperPreview />
                  </div>
                </div>
              </Group>

              <Group title="Paper size" className="mt-2">
                <div className="pt-2 pb-2 pl-[10px]">
                  <Select
                    label="Paper size"
                    value="ISO full bleed A4 (210.00 x 297.00 MM)"
                    className="h-5 w-[304px]"
                  />
                </div>
              </Group>

              <div className="mt-[7px] flex gap-[6px]">
                <div className="flex flex-1 flex-col gap-[5px]">
                  <Group title="Plot area">
                    <div className="pt-[6px] pb-3 pl-[10px]">
                      <label htmlFor="what" className="block h-[14px] leading-[14px]">What to plot:</label>
                      <Select id="what" value="Extents" className="mt-[6px] h-5 w-[81px]" />
                    </div>
                  </Group>
                  <Group title="Plot offset (origin set to printable area)">
                    <div className="flex flex-col gap-[9px] pt-px pb-[13px] pl-[11px]">
                      <div className="flex items-center">
                        <label htmlFor="offx" className="w-[23px]">X:</label>
                        <NumberBox id="offx" value="0.00" className="w-[57px]" />
                        <span className="ml-2 w-[62px] text-[#999]">mm</span>
                        <Tick label="Center the plot" checked />
                      </div>
                      <div className="flex items-center">
                        <label htmlFor="offy" className="w-[23px]">Y:</label>
                        <NumberBox id="offy" value="0.00" className="w-[57px]" />
                        <span className="ml-2 text-[#999]">mm</span>
                      </div>
                    </div>
                  </Group>
                </div>

                <Group title="Plot scale" className="w-[167px]">
                  <div className="flex flex-col pt-[8px] pl-1">
                    <div className="flex h-[14px] items-center">
                      <Tick label="Fit to paper" checked />
                    </div>
                    <div className="mt-[11px] flex items-center">
                      <label htmlFor="scale" className="w-[31px]">Scale:</label>
                      <Select id="scale" value="Custom" disabled className="h-5 w-[123px]" />
                    </div>
                    <div className="mt-2 flex items-center gap-1 pl-[31px]">
                      <NumberBox label="Scale numerator" value="1" className="w-[50px]" />
                      <Select label="Units" value="mm" className="h-5 w-[55px]" />
                      <span className="ml-px">=</span>
                    </div>
                    <div className="mt-[7px] flex items-center gap-1 pl-[31px]">
                      <NumberBox label="Scale denominator" value="1.051" className="w-[50px]" />
                      <span className="text-[#999]">units</span>
                    </div>
                    <div className="mt-[6px] flex h-[14px] items-center pl-[31px]">
                      <Tick label="Scale lineweights" />
                    </div>
                  </div>
                </Group>
              </div>
            </div>

            {/* right side */}
            <div className="flex w-[191px] flex-col">
              <Group title="Plot style table (pen assignments)">
                <div className="pt-[10px] pb-[17px] pl-[11px]">
                  <div className="flex items-center gap-[2px]">
                    <Select label="Plot style table" value="monochrome.ctb" className="h-[22px] w-[143px]" />
                    <button
                      type="button"
                      aria-label="Edit plot style"
                      className="flex size-[22px] items-center justify-center border border-[#adadad] bg-[#e1e1e1]"
                    >
                      <PlotterIcon blue />
                    </button>
                  </div>
                  <div className="mt-2 flex h-[14px] items-center">
                    <Tick label="Display plot styles" />
                  </div>
                </div>
              </Group>

              <Group title="Shaded viewport options" className="mt-2">
                <div className="grid grid-cols-[68px_101px] items-center gap-y-[10px] pt-2 pb-3 pl-[11px]">
                  <label htmlFor="shade" className="text-[#999]">Shade plot</label>
                  <Select id="shade" value="As displayed" disabled framed className="h-5" />
                  <label htmlFor="quality">Quality</label>
                  <Select id="quality" value="Normal" className="h-5" />
                  <label htmlFor="dpi" className="text-[#999]">DPI</label>
                  <NumberBox id="dpi" value="100" />
                </div>
              </Group>

              <Group title="Plot options" className="mt-[9px]">
                <div className="grid auto-rows-[20px] items-center pt-[3px] pb-[5px] pl-[11px]">
                  {plotOptions.map((opt) => (
                    <Tick key={opt.label} label={opt.label} checked={opt.checked} />
                  ))}
                </div>
              </Group>

              <Group title="Drawing orientation" className="mt-[10px]">
                <div className="flex items-center justify-between pr-[27px] pl-[11px]">
                  <div className="grid auto-rows-[23px] items-center">
                    <Radio label="Portrait" value="portrait" current={orientation} onPick={setOrientation} />
                    <Radio label="Landscape" value="landscape" current={orientation} onPick={setOrientation} />
                    <Tick label="Plot upside-down" />
                  </div>
                  <Svg w={26} h={32} className="mb-3">
                    <path d="M1.500 1.500h16l7 7v21h-23z" fill="#fff" stroke="#555" />
                    <path d="M17 1v8h8z" fill="#555" stroke="none" />
                    <text x="13" y="25" textAnchor="middle" fontSize="21" fill="#3187c9" stroke="none" className="font-['Roboto',sans-serif]">
                      A
                    </text>
                  </Svg>
                </div>
              </Group>
            </div>
          </div>

          <div className="mt-3 flex gap-5">
            <Button className="mr-auto w-[69px]">Preview...</Button>
            <Button className="w-[69px]" primary>OK</Button>
            <Button className="w-[69px]">Cancel</Button>
            <Button className="w-[69px]">Help</Button>
          </div>
        </form>

        {/* tooltip of the printer list */}
        <div
          role="tooltip"
          className="absolute top-[161px] left-[115px] w-[322px] bg-[#f2f2f2]/90 pt-2 pr-[10px] pb-[11px] pl-[7px] text-[11px] leading-[14px] text-[#666] shadow-[1px_1px_4px_rgba(0,0,0,0.35)]"
        >
          Lists the available PC3 files or system printers from which you can select to plot or publish the
          current layout or sheet. An icon in front of the device name identifies it as a PC3 file or a
          system printer.
        </div>

        {/* mouse pointer */}
        <Svg w={13} h={19} className="absolute top-[232px] left-[39px]">
          <path d="M1 1v14l3.500-3 2.500 6 2.500-1-2.500-6H12z" fill="#fff" stroke="#777" />
        </Svg>
      </div>
    </div>
  );
}

export default function App() {
  return (
    <div className="flex h-screen flex-col overflow-hidden border-r border-[#12161c] bg-[#222933] font-['Roboto','Liberation_Sans',sans-serif] leading-4">
      <TitleBar />
      <RibbonTabs />
      <Ribbon />
      <FileTabs />
      <Workspace />
      <StatusBar />
      <Taskbar />
      <PageSetupDialog />
    </div>
  );
}
